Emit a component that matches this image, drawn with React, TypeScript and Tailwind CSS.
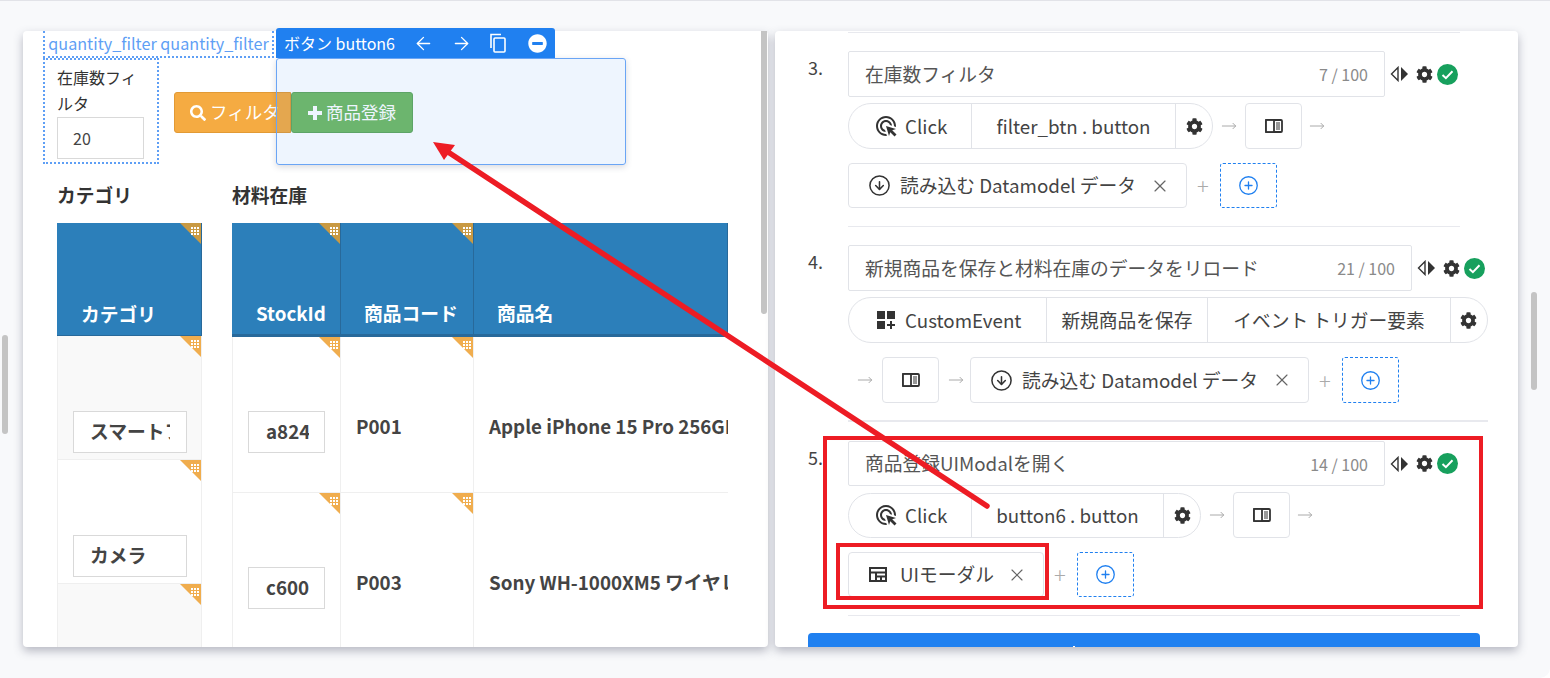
import { ArrowLeft, ArrowRight, CircleArrowDown, CirclePlus, MoveRight, X } from "lucide-react";
import { FaCog, FaMinusCircle, FaSearch } from "react-icons/fa";

function Corner({ dark = false }: { dark?: boolean }) {
  return (
    <svg className="absolute right-0 top-0 z-10" width="21" height="21" viewBox="0 0 21 21">
      <polygon points="0,0 21,0 21,21" fill={dark ? "#c99a43" : "#f0ad4e"} />
      {[0, 3, 6].map((y) =>
        [0, 3, 6].map((x) => <rect key={`${x}-${y}`} x={11 + x} y={4 + y} width="2" height="2" fill="#fff" />),
      )}
    </svg>
  );
}

function HeaderCell({ label, className, corner = true }: { label: string; className: string; corner?: boolean }) {
  return (
    <div className={`relative flex shrink-0 items-end border-r border-[#28699a] bg-[#2c7fba] pb-[7px] text-[18.75px] font-bold text-white ${className}`}>
      {corner && <Corner dark />}
      {label}
    </div>
  );
}

function CellInput({ value, className }: { value: string; className: string }) {
  return (
    <div className={`flex h-[42px] items-center overflow-hidden border border-[#d9d9d9] bg-white pb-[2px] text-[18.75px] font-bold whitespace-nowrap text-[#444] ${className}`}>
      <span className="block w-full overflow-hidden">{value}</span>
    </div>
  );
}

function ClickIcon() {
  return (
    <svg width="24" height="24" viewBox="0 0 24 24" fill="#333">
      <path d="M11.71 17.99C8.53 17.84 6 15.22 6 12c0-3.31 2.69-6 6-6 3.22 0 5.84 2.53 5.99 5.71l-2.1-.63C15.48 9.31 13.89 8 12 8c-2.21 0-4 1.79-4 4 0 1.89 1.31 3.48 3.08 3.89l.63 2.1zM22 12c0 .3-.01.6-.04.9l-1.97-.59c.01-.1.01-.21.01-.31 0-4.42-3.58-8-8-8s-8 3.58-8 8 3.58 8 8 8c.1 0 .21 0 .31-.01l.59 1.97c-.3.03-.6.04-.9.04-5.52 0-10-4.48-10-10S6.48 2 12 2s10 4.48 10 10zm-3.77 4.26L22 15l-10-3 3 10 1.26-3.77 4.27 4.27 1.98-1.98-4.28-4.26z" />
    </svg>
  );
}

function CustomEventIcon() {
  return (
    <svg width="24" height="24" viewBox="0 0 24 24" fill="#333">
      <path d="M3 3h8v8H3zm10 0h8v8h-8zM3 13h8v8H3zm15 0h-2v3h-3v2h3v3h2v-3h3v-2h-3z" />
    </svg>
  );
}

function PanelIcon() {
  return (
    <svg width="18" height="14" viewBox="0 0 18 14" fill="none" stroke="#333">
      <rect x="1" y="1" width="16" height="12" rx="1" strokeWidth="1.8" />
      <rect x="1" y="1" width="8" height="12" fill="#fff" strokeWidth="1.8" />
      <path d="M11 4h4M11 6h4M11 8h4M11 10h4" strokeWidth="1" />
    </svg>
  );
}

function ModalIcon() {
  return (
    <svg width="18" height="15" viewBox="0 0 18 15" fill="none" stroke="#333" strokeWidth="2" className="mr-1">
      <rect x="1" y="1" width="16" height="13" />
      <path d="M1 5.5h16M7 5.5V14M7 9.5h10M12 9.5V14" />
    </svg>
  );
}

function StepTools() {
  return (
    <div className="ml-[5px] flex items-center gap-[7px]">
      <svg width="19" height="16" viewBox="0 0 19 16">
        <path d="M8 1.5v13L1.5 8z" fill="none" stroke="#333" strokeWidth="1.4" />
        <path d="M11 1v14l7-7z" fill="#333" />
      </svg>
      <FaCog size={17} color="#333" />
      <svg width="21" height="21" viewBox="0 0 21 21" className="-ml-[3px]">
        <circle cx="10.5" cy="10.5" r="10.5" fill="#17a05d" />
        <path d="M5.5 11l3.4 3.2L15.5 7.3" fill="none" stroke="#fff" strokeWidth="2" />
      </svg>
    </div>
  );
}

function TitleInput({ title, count, width, height = "h-[46px]" }: { title: string; count: string; width: string; height?: string }) {
  return (
    <div className="flex items-center">
      <div className={`flex items-center justify-between rounded-[2px] border border-[#e1e3e8] pl-4 pr-4 text-[18.75px] text-[#555] ${width} ${height}`}>
        <span>{title}</span>
        <span className="text-[16px] text-[#8a8a8a]">{count}</span>
      </div>
      <StepTools />
    </div>
  );
}

function GrayArrow() {
  return <MoveRight size={16} color="#aaa" strokeWidth={1.5} className="shrink-0" />;
}

function PanelBox() {
  return (
    <div className="flex h-[46px] w-[57px] shrink-0 items-center justify-center rounded-[4px] border border-[#e1e3e8]">
      <PanelIcon />
    </div>
  );
}

function AddBox() {
  return (
    <div className="ml-[11px] flex h-full w-[57px] items-center justify-center rounded-[3px] border border-dashed border-[#2080f0]">
      <CirclePlus size={21} color="#2080f0" strokeWidth={1.5} />
    </div>
  );
}

function ActionChip({ icon, label, width }: { icon: React.ReactNode; label: string; width: string }) {
  return (
    <div className={`flex h-full shrink-0 items-center justify-between rounded-[4px] border border-[#e1e3e8] pl-5 pr-[16px] text-[18.75px] text-[#444] ${width}`}>
      <span className="flex items-center gap-[9px]">
        {icon}
        {label}
      </span>
      <X size={20} color="#666" strokeWidth={1.4} />
    </div>
  );
}

function Plus() {
  return <span className="ml-[10px] text-[22px] font-light text-[#aaa]">+</span>;
}

function EventPill({ name, nameWidth, height = "h-[46px]" }: { name: string; nameWidth: string; height?: string }) {
  return (
    <div className="flex items-center">
      <div className={`flex items-center rounded-full border border-[#e1e3e8] text-[18.75px] text-[#444] ${height}`}>
        <div className="flex h-full w-[123px] items-center gap-[7px] border-r border-[#e1e3e8] pl-[25px]">
          <ClickIcon />
          Click
        </div>
        <div className={`flex h-full items-center justify-center border-r border-[#e1e3e8] ${nameWidth}`}>{name}</div>
        <div className="flex w-[36px] items-center justify-center">
          <FaCog size={17} color="#333" />
        </div>
      </div>
      <div className="mx-[8px]">
        <GrayArrow />
      </div>
      <PanelBox />
      <div className="mx-[7px]">
        <GrayArrow />
      </div>
    </div>
  );
}

function LeftPanel() {
  return (
    <div className="h-[616px] w-[745px] shrink-0 overflow-hidden rounded-[4px] bg-white pl-5 shadow-[0_4px_10px_rgba(60,64,90,0.35)]">
      <div className="flex h-[27px] w-[231px] items-center justify-center border-x-2 border-b-2 border-dotted border-[#5f9ff5] text-[16.2px] whitespace-nowrap text-[#5f9ff5]">
        quantity_filter quantity_filter
      </div>
      <div className="flex">
        <div className="h-[106px] w-[116px] border-2 border-dotted border-[#5f9ff5] pl-[12px] pt-[4px] text-[16px] leading-[26px] text-[#333]">
          <div>
            在庫数フィ
            <br />
            ルタ
          </div>
          <div className="mt-px flex h-[42px] w-[87px] items-center border border-[#d9d9d9] pl-[15px] text-[#444]">20</div>
        </div>
        <div className="ml-[15px] mt-[34px] flex h-[41px]">
          <div className="flex w-[117px] items-center gap-[4px] overflow-hidden whitespace-nowrap rounded-l-[3px] border border-[#e29a35] bg-[#f5ab42] pl-[15px] text-[17.5px] text-white">
            <FaSearch size={16} className="shrink-0" />
            フィルタ
          </div>
          <div className="flex w-[122px] items-center gap-[4px] rounded-[3px] border border-[#62a85c] bg-[#72ba63] pl-[16px] text-[17.5px] text-white">
            <svg width="14" height="14" viewBox="0 0 14 14" fill="#fff" className="shrink-0">
              <path d="M5 0h4v5h5v4H9v5H5V9H0V5h5z" />
            </svg>
            商品登録
          </div>
        </div>
      </div>
      <div className="ml-[14px] mt-[17px] flex gap-[30px]">
        <div className="w-[145px]">
          <div className="mb-[15px] h-[27px] text-[18.75px] font-bold leading-[27px] text-[#333]">カテゴリ</div>
          <HeaderCell label="カテゴリ" className="h-[113px] w-full border-b border-[#28699a] pl-[24px]" />
          {[
            { bg: "bg-[#f9f9f9]", value: "スマートフォン" },
            { bg: "bg-white", value: "カメラ" },
            { bg: "bg-[#f9f9f9]", value: "" },
          ].map((row, i) => (
            <div key={i} className={`relative h-[124px] border-b border-x border-[#efefef] px-[15px] pt-[75px] ${row.bg}`}>
              <Corner />
              {row.value && <CellInput value={row.value} className="w-[114px] pl-[16px] pr-[16px]" />}
            </div>
          ))}
        </div>
        <div className="w-[496px] overflow-hidden">
          <div className="mb-[15px] h-[27px] text-[18.75px] font-bold leading-[27px] text-[#333]">材料在庫</div>
          <div className="flex">
            <HeaderCell label="StockId" className="h-[114px] w-[109px] border-b-[3px] pl-[24px]" />
            <HeaderCell label="商品コード" className="h-[114px] w-[133px] border-b-[3px] pl-[23px]" />
            <HeaderCell label="商品名" corner={false} className="h-[114px] w-[254px] border-b-[3px] pl-[23px]" />
          </div>
          {[
            { id: "a824b1", code: "P001", name: "Apple iPhone 15 Pro 256GB" },
            { id: "c60021", code: "P003", name: "Sony WH-1000XM5 ワイヤレス" },
          ].map((row) => (
            <div key={row.code} className="flex h-[156px] border-b border-[#efefef] text-[18.75px] font-bold text-[#444]">
              <div className="relative w-[109px] shrink-0 border-x border-[#efefef] pl-[15px] pt-[74px]">
                <Corner />
                <CellInput value={row.id} className="w-[77px] pl-[17px] pr-[15px]" />
              </div>
              <div className="relative w-[133px] shrink-0 border-r border-[#efefef] pl-[15px] pt-[75px]">
                <Corner />
                {row.code}
              </div>
              <div className="w-[254px] overflow-hidden whitespace-nowrap border-[#efefef] pl-[15px] pt-[75px]">{row.name}</div>
            </div>
          ))}
        </div>
      </div>
    </div>
  );
}

function RightPanel() {
  const downloadIcon = <CircleArrowDown size={23} color="#333" strokeWidth={1.6} className="-ml-px" />;
  return (
    <div className="h-[616px] w-[743px] shrink-0 overflow-hidden rounded-[4px] bg-white pl-[33px] pt-[1px] text-[#444] shadow-[0_4px_10px_rgba(60,64,90,0.35)]">
      <div className="ml-[40px] h-px w-[612px] bg-[#e8e9ee]" />
      <div className="flex pt-[18px]">
        <div className="w-[40px] pt-[3px] text-[18px]">3.</div>
        <div>
          <TitleInput title="在庫数フィルタ" count="7 / 100" width="w-[537px]" />
          <div className="mt-[6px]">
            <EventPill name="filter_btn . button" nameWidth="w-[204px]" />
          </div>
          <div className="mt-[14px] flex h-[45px] items-center">
            <ActionChip icon={downloadIcon} label="読み込む Datamodel データ" width="w-[339px]" />
            <Plus />
            <AddBox />
          </div>
        </div>
      </div>
      <div className="ml-[40px] mt-[18px] h-px w-[612px] bg-[#e8e9ee]" />
      <div className="flex pt-[18px]">
        <div className="w-[40px] pt-[3px] text-[18px]">4.</div>
        <div>
          <TitleInput title="新規商品を保存と材料在庫のデータをリロード" count="21 / 100" width="w-[564px]" />
          <div className="mt-[6px] flex h-[46px] w-[640px] items-center rounded-full border border-[#e1e3e8] text-[18.75px]">
            <div className="flex h-full w-[198px] items-center gap-[7px] border-r border-[#e1e3e8] pl-[25px]">
              <CustomEventIcon />
              CustomEvent
            </div>
            <div className="flex h-full w-[161px] items-center justify-center border-r border-[#e1e3e8]">新規商品を保存</div>
            <div className="flex h-full w-[243px] items-center justify-center border-r border-[#e1e3e8]">イベント トリガー要素</div>
            <div className="flex w-[34px] items-center justify-center">
              <FaCog size={17} color="#333" />
            </div>
          </div>
          <div className="mt-[14px] flex h-[46px] items-center">
            <div className="mx-[9px]">
              <GrayArrow />
            </div>
            <PanelBox />
            <div className="ml-[9px] mr-[6px]">
              <GrayArrow />
            </div>
            <ActionChip icon={downloadIcon} label="読み込む Datamodel データ" width="w-[339px]" />
            <Plus />
            <AddBox />
          </div>
        </div>
      </div>
      <div className="ml-[40px] mt-[17px] h-[2px] w-[640px] bg-[#e8e9ee]" />
      <div className="flex pt-[19px]">
        <div className="w-[40px] pt-[3px] text-[18px]">5.</div>
        <div>
          <TitleInput title="商品登録UIModalを開く" count="14 / 100" width="w-[537px]" height="h-[45px]" />
          <div className="mt-[6px]">
            <EventPill name="button6 . button" nameWidth="w-[192px]" height="h-[45px]" />
          </div>
          <div className="mt-[14px] flex h-[45px] items-center">
            <ActionChip icon={<ModalIcon />} label="UIモーダル" width="w-[196px]" />
            <Plus />
            <AddBox />
          </div>
        </div>
      </div>
      <div className="ml-[40px] mt-[18px] h-px w-[612px] bg-[#e8e9ee]" />
      <div className="mt-[17px] h-[40px] w-[672px] rounded-[4px] bg-[#2080f0] pl-[265px] pt-[13px]">
        <div className="h-px w-[2px] bg-white" />
      </div>
    </div>
  );
}

export default function App() {
  return (
    <div className="relative h-[678px] w-full overflow-hidden rounded-br-[10px] border-t border-[#e2e3e8] bg-[#f8f9fb] font-['Noto_Sans_CJK_JP','Noto_Sans',sans-serif]">
      <div className="flex gap-[7px] pl-[23px] pt-[30px]">
        <LeftPanel />
        <RightPanel />
      </div>

      {/* page scrollbar thumbs */}
      <div className="absolute left-[2px] top-[334px] h-[99px] w-[6px] rounded-full bg-[#c4c4c4]" />
      <div className="absolute left-[761px] top-[30px] h-[283px] w-[6px] rounded-b-full bg-[#c4c4c4]" />
      <div className="absolute left-[1531px] top-[291px] h-[98px] w-[6px] rounded-full bg-[#c4c4c4]" />

      {/* selected element overlay */}
      <div className="absolute left-[276px] top-[57px] h-[107px] w-[350px] rounded-[3px] border border-[#6aa5f5] bg-[#2080f0]/[0.08] shadow-[0_2px_6px_rgba(60,64,90,0.2)]" />
      <div className="absolute left-[276px] top-[27px] flex h-[30px] w-[279px] items-center rounded-t-[3px] bg-[#2080f0] pl-[8px] text-[16px] whitespace-nowrap text-white">
        <span>ボタン button6</span>
        <ArrowLeft size={21} strokeWidth={1.5} className="ml-[18px]" />
        <ArrowRight size={21} strokeWidth={1.5} className="ml-[17px]" />
        <svg width="20" height="20" viewBox="0 0 20 20" fill="none" stroke="#fff" strokeWidth="1.6" className="ml-[16px]">
          <path d="M3 15V1.5h10" />
          <rect x="6" y="5" width="11" height="14" rx="1" />
        </svg>
        <FaMinusCircle size={19} className="ml-[20px]" />
      </div>

      {/* red annotations */}
      <svg className="pointer-events-none absolute left-0 top-[-1px]" width="1550" height="678" viewBox="0 0 1550 678" fill="none">
        <rect x="825" y="438" width="656" height="169" stroke="#ed1c24" strokeWidth="4" />
        <rect x="838" y="545" width="209" height="53" stroke="#ed1c24" strokeWidth="4" />
        <line x1="987" y1="506" x2="445" y2="150" stroke="#ed1c24" strokeWidth="5.5" strokeLinecap="round" />
        <polygon points="433,142 455,145 444,160" fill="#ed1c24" />
      </svg>
    </div>
  );
}
